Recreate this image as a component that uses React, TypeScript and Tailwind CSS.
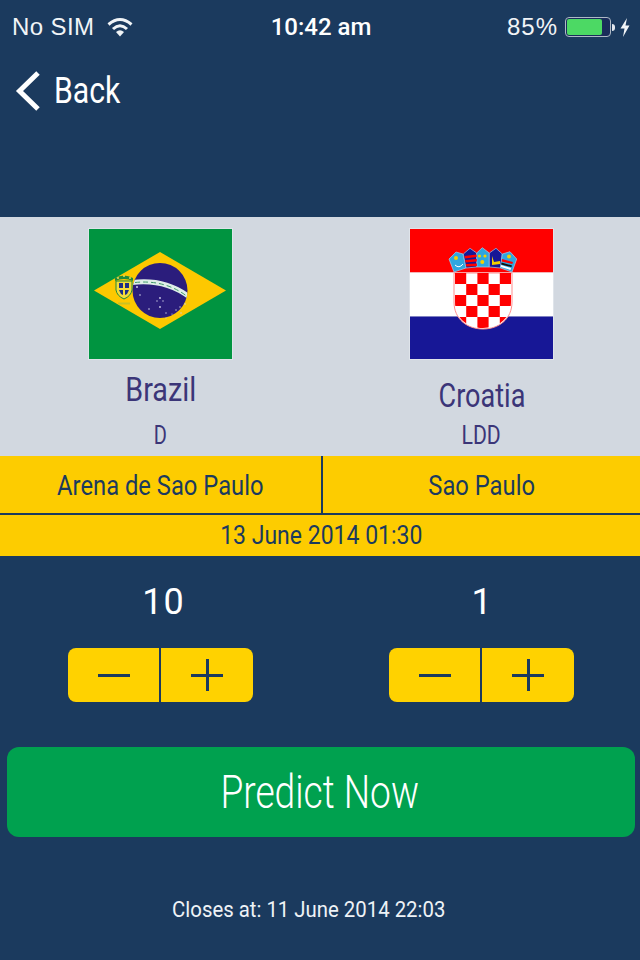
const navy = "text-[#1b3a5e]";

function BrazilFlag() {
    return (
        <svg width="145" height="132" viewBox="0 0 145 132" className="block outline outline-1 -outline-offset-1 outline-[#dfe4ea]">
            <defs>
                <clipPath id="globe">
                    <circle cx="72" cy="62.5" r="27.5" />
                </clipPath>
            </defs>
            <rect width="145" height="132" fill="#009440" />
            <polygon points="6,62.5 72,24 138,62.5 72,101" fill="#fdc800" />
            <circle cx="72" cy="62.5" r="27.5" fill="#2b1d7c" />
            <path d="M44 57 Q76 53 100 71 L100 65 Q76 48 44 52 Z" fill="#dfeee8" clipPath="url(#globe)" />
            <path d="M47 54.5 Q76 51.5 98 67.5" stroke="#3f9a6a" strokeWidth="1" strokeDasharray="5 3" fill="none" />
            <g fill="#cfcfe8">
                <circle cx="49" cy="59" r="1" />
                <circle cx="52" cy="67" r="0.8" />
                <circle cx="72" cy="70" r="0.9" />
                <circle cx="69" cy="73" r="0.7" />
                <circle cx="75" cy="73" r="0.7" />
                <circle cx="72" cy="79" r="0.9" />
                <circle cx="61" cy="81" r="0.8" />
                <circle cx="78" cy="85" r="0.7" />
                <circle cx="78" cy="90" r="0.6" />
                <circle cx="88" cy="82" r="0.7" />
                <circle cx="93" cy="85" r="0.7" />
                <circle cx="92" cy="79" r="0.7" />
                <circle cx="97" cy="76" r="0.8" />
                <circle cx="84" cy="86" r="0.6" />
            </g>
            <path d="M27 50 Q36 45 45 50 L45 53 Q36 49 27 53 Z" fill="#1f8a3c" />
            <g fill="#ffe45c">
                <circle cx="30" cy="50" r="0.9" />
                <circle cx="36" cy="48" r="0.9" />
                <circle cx="42" cy="50" r="0.9" />
            </g>
            <path d="M28 53 H44 V62 Q43 68 36 71 Q29 68 28 62 Z" fill="#f3dc3a" stroke="#1f8a3c" strokeWidth="1" />
            <path d="M31 55 L35 55 L35 60 L31 60 Z M37 55 L41 55 L41 60 L37 60 Z M31 62 L35 62 L35 67 L33 66 Z M37 62 L41 62 L39 66 L37 67 Z" fill="#1c2f86" />
            <rect x="30" y="74.5" width="12" height="2" fill="#c9c224" />
        </svg>
    );
}

const checks: [number, number][] = [];
for (let r = 0; r < 5; r++) {
    for (let c = 0; c < 5; c++) {
        if ((r + c) % 2 === 0) checks.push([r, c]);
    }
}

function CroatiaFlag() {
    return (
        <svg width="145" height="132" viewBox="0 0 145 132" className="block outline outline-1 -outline-offset-1 outline-[#dfe4ea]">
            <defs>
                <clipPath id="shield">
                    <path d="M46 45 H102 V74 C102 90 90 100 74 100 C58 100 46 90 46 74 Z" />
                </clipPath>
            </defs>
            <rect width="145" height="44.5" fill="#ff0000" />
            <rect y="44.5" width="145" height="44" fill="#ffffff" />
            <rect y="88.5" width="145" height="43.5" fill="#171796" />
            <path d="M45 45 H103 V74 C103 91 90 101 74 101 C58 101 45 91 45 74 Z" fill="#ffffff" stroke="#ff8d8d" strokeWidth="1" />
            <g clipPath="url(#shield)" fill="#ff0000">
                {checks.map(([r, c]) => (
                    <rect key={`${r}-${c}`} x={46 + c * 11.2} y={45 + r * 11} width="11.2" height="11" />
                ))}
            </g>
            <g stroke="#9fd0ee" strokeWidth="0.7">
                <polygon points="40,31 47,24 54,26 57,40 45,44" fill="#2ea6e0" />
                <polygon points="54.3,26 61,20.3 67.7,25 68,39 57,40" fill="#171796" />
                <polygon points="67.7,25 73.3,19.7 80.3,25 80.3,39 68,39" fill="#2ea6e0" />
                <polygon points="80.3,25 87,20.3 93.3,26 91.5,40 80.3,39" fill="#171796" />
                <polygon points="93.3,26 101,23.7 107.7,31 103,44 91.5,40" fill="#2ea6e0" />
            </g>
            <polygon points="55.5,28 67.5,26.5 67.7,29 56,30.5" fill="#ff0000" />
            <polygon points="56.2,32 67.8,31 67.8,33.5 56.7,34.5" fill="#ff0000" />
            <polygon points="56.9,36 67.9,35.5 67.9,38 57.3,38.5" fill="#ff0000" />
            <polygon points="93,31 104,34 103.3,36 92.6,33.5" fill="#ff0000" />
            <polygon points="92.4,34.5 103,37.5 102.4,39 92.2,36.5" fill="#111111" />
            <polygon points="92.1,37 102,40 101.5,42 91.8,39" fill="#ffffff" />
            <g fill="#f4d000">
                <circle cx="47" cy="30" r="2" />
                <circle cx="70.5" cy="28" r="1.6" />
                <circle cx="76" cy="28" r="1.6" />
                <circle cx="73.3" cy="34" r="2" />
                <circle cx="100" cy="28.5" r="2" />
                <path d="M83 28 L85 34 L91 33 L91 36 L83 37 Z" />
            </g>
            <path d="M46 37 Q50 41 54 36" stroke="#ffffff" strokeWidth="1" fill="none" />
        </svg>
    );
}

function Stepper() {
    return (
        <div className="flex h-[54px] w-[185px] rounded-lg bg-[#ffd200]">
            <button className="flex h-full w-[91px] items-center justify-center">
                <span className="h-[3px] w-8 bg-[#1b3a5e]" />
            </button>
            <div className="h-full w-[2px] bg-[#1b3a5e]" />
            <button className="relative flex h-full flex-1 items-center justify-center">
                <span className="h-[3px] w-8 bg-[#1b3a5e]" />
                <span className="absolute h-8 w-[3px] bg-[#1b3a5e]" />
            </button>
        </div>
    );
}

export default function App() {
    return (
        <div className="flex h-[960px] w-[640px] flex-col overflow-hidden bg-[#1b3a5e] font-['Roboto',sans-serif] text-white">
            <div className="flex h-[54px] items-center justify-between pl-3 pr-[10px] font-['Liberation_Sans',sans-serif] text-[24px] text-[#f1f4f7]">
                <div className="flex w-[200px] items-center gap-[13px]">
                    <span className="tracking-[0.4px]">No SIM</span>
                    <svg width="26" height="20" viewBox="0 0 26 20" fill="none" stroke="#f1f4f7" strokeWidth="3">
                        <path d="M1.5 7.5 Q13 -2.5 24.5 7.5" />
                        <path d="M6 12 Q13 5.5 20 12" />
                        <path d="M9 15 Q13 11.5 17 15 L13 19.5 Z" fill="#f1f4f7" stroke="none" />
                    </svg>
                </div>
                <span className="font-['Roboto',sans-serif] font-medium text-white">10:42 am</span>
                <div className="flex w-[200px] items-center justify-end">
                    <span className="tracking-[1px]">85%</span>
                    <div className="ml-[7px] flex items-center gap-[1px]">
                        <div className="flex h-[20px] w-[46px] overflow-hidden rounded-[4px] border border-[#aeb9c6] bg-[#1a2d5a] p-[1px]">
                            <div className="h-full w-[35px] rounded-[2px] bg-[#4cd964]" />
                        </div>
                        <div className="h-[7px] w-[3px] rounded-r-sm bg-[#e3e8ee]" />
                    </div>
                    <svg width="10" height="19" viewBox="0 0 10 19" fill="#f1f4f7" className="ml-[5px]">
                        <polygon points="7,0 0.5,10.5 4.5,10.5 3,19 9.5,7.5 5.5,7.5" />
                    </svg>
                </div>
            </div>

            <div className="flex h-[163px] items-start pl-[15px] pt-[17px]">
                <svg width="26" height="40" viewBox="0 0 26 40" fill="none" stroke="#ffffff" strokeWidth="5">
                    <path d="M23 2 L4.5 20 L23 38" />
                </svg>
                <span className="ml-[13px] inline-block origin-left scale-x-[0.84] text-[36px] leading-[40px]">Back</span>
            </div>

            <div className="grid h-[239px] grid-cols-[321px_319px] bg-[#d2d8e0] text-[#3b3578]">
                <div className="flex flex-col items-center pt-[11px]">
                    <BrazilFlag />
                    <span className="mt-[12px] scale-x-[0.87] text-[33px] leading-[36px]">Brazil</span>
                    <span className="mt-[14px] scale-x-[0.8] text-[25px] leading-[28px]">D</span>
                </div>
                <div className="flex flex-col items-center pl-[2px] pt-[11px]">
                    <CroatiaFlag />
                    <span className="mt-[18px] scale-x-[0.82] text-[33px] leading-[36px]">Croatia</span>
                    <span className="mt-[8px] scale-x-[0.85] text-[25px] leading-[28px]">LDD</span>
                </div>
            </div>

            <div className={`flex h-[57px] bg-[#fdcc00] text-[27px] ${navy}`}>
                <div className="flex w-[321px] items-center justify-center pt-[3px]">
                    <span className="scale-x-[0.88] whitespace-nowrap">Arena de Sao Paulo</span>
                </div>
                <div className="w-[2px] bg-[#1b3a5e]" />
                <div className="flex flex-1 items-center justify-center pt-[3px]">
                    <span className="scale-x-[0.88] whitespace-nowrap">Sao Paulo</span>
                </div>
            </div>
            <div className="h-[2px] bg-[#1b3a5e]" />
            <div className={`flex h-[41px] items-center justify-center bg-[#fdcc00] pl-[3px] text-[26px] ${navy}`}>
                <span className="scale-x-[0.885] whitespace-nowrap">13 June 2014 01:30</span>
            </div>

            <div className="grid grid-cols-[321px_319px]">
                <div className="flex flex-col items-center">
                    <span className="ml-[6px] mt-[24px] text-[36px] leading-[44px] tracking-[1px]">10</span>
                    <div className="mt-[24px]"><Stepper /></div>
                </div>
                <div className="flex flex-col items-center pl-[2px]">
                    <span className="mt-[24px] text-[36px] leading-[44px]">1</span>
                    <div className="mt-[24px]"><Stepper /></div>
                </div>
            </div>

            <div className="ml-[7px] mt-[45px] flex h-[90px] w-[628px] items-center justify-center rounded-xl bg-[#00a14f] pr-[3px] text-[47px] font-light">
                <span className="scale-x-[0.79] whitespace-nowrap">Predict Now</span>
            </div>

            <div className="mt-[57px] pr-[22px] text-center text-[22px] leading-[32px] text-[#eef2f6]">
                <span className="inline-block scale-x-[0.925] whitespace-nowrap">Closes at: 11 June 2014 22:03</span>
            </div>
        </div>
    );
}
